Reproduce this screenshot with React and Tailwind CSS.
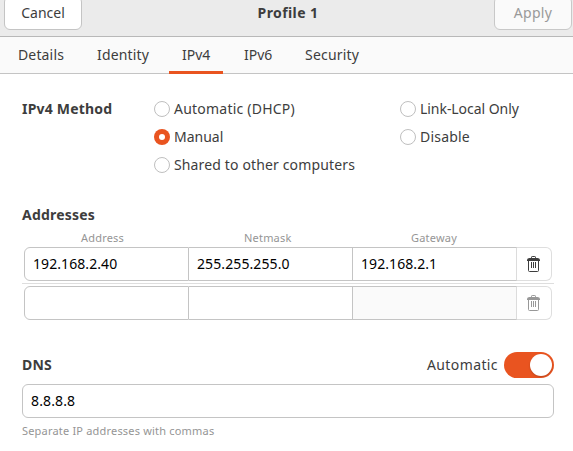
const tabs = [
  { label: 'Details', box: 'w-[79px] pl-[18px]', track: 'tracking-[0.15px]' },
  { label: 'Identity', box: 'w-[90px] pl-[18px]', track: 'tracking-[0.15px]' },
  { label: 'IPv4', box: 'w-[54px] pl-[13px]', track: 'tracking-[0px]', active: true },
  { label: 'IPv6', box: 'w-[69px] pl-[21px]', track: 'tracking-[0px]' },
  { label: 'Security', box: 'w-[80px] pl-[13px]', track: 'tracking-[0.2px]' },
];

function Radio({ label, checked, track = '' }) {
  return (
    <label className="flex h-7 items-center gap-1">
      <span
        className={
          checked
            ? 'flex size-4 shrink-0 items-center justify-center rounded-full bg-[#e95420]'
            : 'size-4 shrink-0 rounded-full border border-[#bfbfbf] bg-white'
        }
      >
        {checked && <span className="size-[6px] rounded-full bg-white" />}
      </span>
      <span className={`whitespace-nowrap ${track}`}>{label}</span>
    </label>
  );
}

function TrashIcon() {
  return (
    <svg width="13" height="16" viewBox="0 0 13 16" fill="none">
      <path d="M4.5 2V1.2Q4.5.5 5.2.5h2.6q.7 0 .7.7V2" stroke="currentColor" />
      <path d="M0 5V3.8Q.3 2 2.5 2h8Q12.700 2 13 3.800V5z" fill="currentColor" />
      <path d="M1.500 5v9.500q0 1 1 1h8q1 0 1-1V5" stroke="currentColor" />
      <path d="M4 6h1v6H4zM6 6h1v6H6zM8 6h1v6H8z" fill="currentColor" />
    </svg>
  );
}

function AddressRow({ address, netmask, gateway, disabled }) {
  return (
    <div className="ml-[2px] flex h-[34px] w-[528px] text-black">
      <div className="flex w-[165px] items-center rounded-l-[6px] border border-[#c4c4c4] pl-[8px] tracking-[0.08px]">{address}</div>
      <div className="flex w-[163px] items-center border-y border-[#c4c4c4] pl-[8px] tracking-[0.1px]">{netmask}</div>
      <div className={`flex w-[165px] items-center border border-r-[#dcdcdc] border-[#c4c4c4] pl-[8px] tracking-[0.08px] ${disabled ? 'bg-[#fafafa]' : ''}`}>
        {gateway}
      </div>
      <div className={`flex w-[35px] items-center justify-center rounded-r-[6px] border border-l-0 border-[#dedede] pr-[2px] ${disabled ? 'text-[#989898]' : 'text-[#3d3d3d]'}`}>
        <TrashIcon />
      </div>
    </div>
  );
}

export default function App() {
  return (
    <div className="h-[451px] w-[573px] overflow-hidden bg-white font-['Noto_Sans',sans-serif] text-[14px] leading-5 text-[#3d3d3d]">
      <header className="flex h-[37px] justify-between border-b border-[#b8b8b8] bg-[#ebebeb] pl-1 pr-px">
        <button className="-mt-1 flex h-[34px] w-[78px] items-center justify-center rounded-[6px] border border-[#c4c4c4] bg-white">
          <span>Cancel</span>
        </button>
        <h1 className="mt-[3px] font-bold tracking-[0.4px]">Profile 1</h1>
        <button className="-mt-1 flex h-[34px] w-[78px] items-center justify-center rounded-[6px] border border-[#c8c8c8] bg-[#fafafa] text-[#999]">
          <span className="tracking-[0.3px]">Apply</span>
        </button>
      </header>

      <nav className="flex h-[37px] border-b border-[#c4c4c4] bg-[#fafafa]">
        {tabs.map((tab) => (
          <div
            key={tab.label}
            className={`h-[37px] shrink-0 whitespace-nowrap pt-2 ${tab.box} ${tab.track} ${tab.active ? 'border-b-[3px] border-[#e95420]' : ''}`}
          >
            {tab.label}
          </div>
        ))}
      </nav>

      <main className="pl-[22px] pt-[21px]">
        <section className="flex">
          <h2 className="w-[132px] pt-1 font-bold tracking-[0.2px]">IPv4 Method</h2>
          <div className="w-[246px]">
            <Radio label="Automatic (DHCP)" track="tracking-[0.22px]" />
            <Radio label="Manual" checked />
            <Radio label="Shared to other computers" track="tracking-[0.14px]" />
          </div>
          <div>
            <Radio label="Link-Local Only" track="tracking-[-0.05px]" />
            <Radio label="Disable" track="tracking-[0.2px]" />
          </div>
        </section>

        <section className="mt-[26px]">
          <h2 className="font-bold tracking-[0.2px]">Addresses</h2>
          <div className="flex h-[22px] pt-[5px] text-[11px] leading-4 tracking-[0.2px] text-[#959595]">
            <span className="w-[163px] pl-[59px]">Address</span>
            <span className="w-[167px] pl-[59px]">Netmask</span>
            <span className="pl-[59px]">Gateway</span>
          </div>
          <AddressRow address="192.168.2.40" netmask="255.255.255.0" gateway="192.168.2.1" />
          <div className="mb-[2px] mt-[2px] h-px w-[532px] bg-[#dedede]" />
          <AddressRow disabled />
        </section>

        <section className="mt-8 w-[532px]">
          <div className="flex h-[26px] items-center">
            <h2 className="font-bold tracking-[0.2px]">DNS</h2>
            <span className="ml-auto mr-[6px] tracking-[0.4px]">Automatic</span>
            <span className="flex h-[26px] w-[50px] items-center justify-end rounded-full bg-[#e95420] pr-[2px]">
              <span className="size-[22px] rounded-full bg-white shadow-[0_1px_2px_rgba(0,0,0,0.2)]" />
            </span>
          </div>
          <div className="mt-[6px] flex h-[34px] items-center rounded-[6px] border border-[#c4c4c4] pl-2 tracking-[0.12px] text-black">8.8.8.8</div>
          <p className="mt-[5px] text-[11px] leading-4 tracking-[0.19px] text-[#959595]">Separate IP addresses with commas</p>
        </section>
      </main>
    </div>
  );
}
